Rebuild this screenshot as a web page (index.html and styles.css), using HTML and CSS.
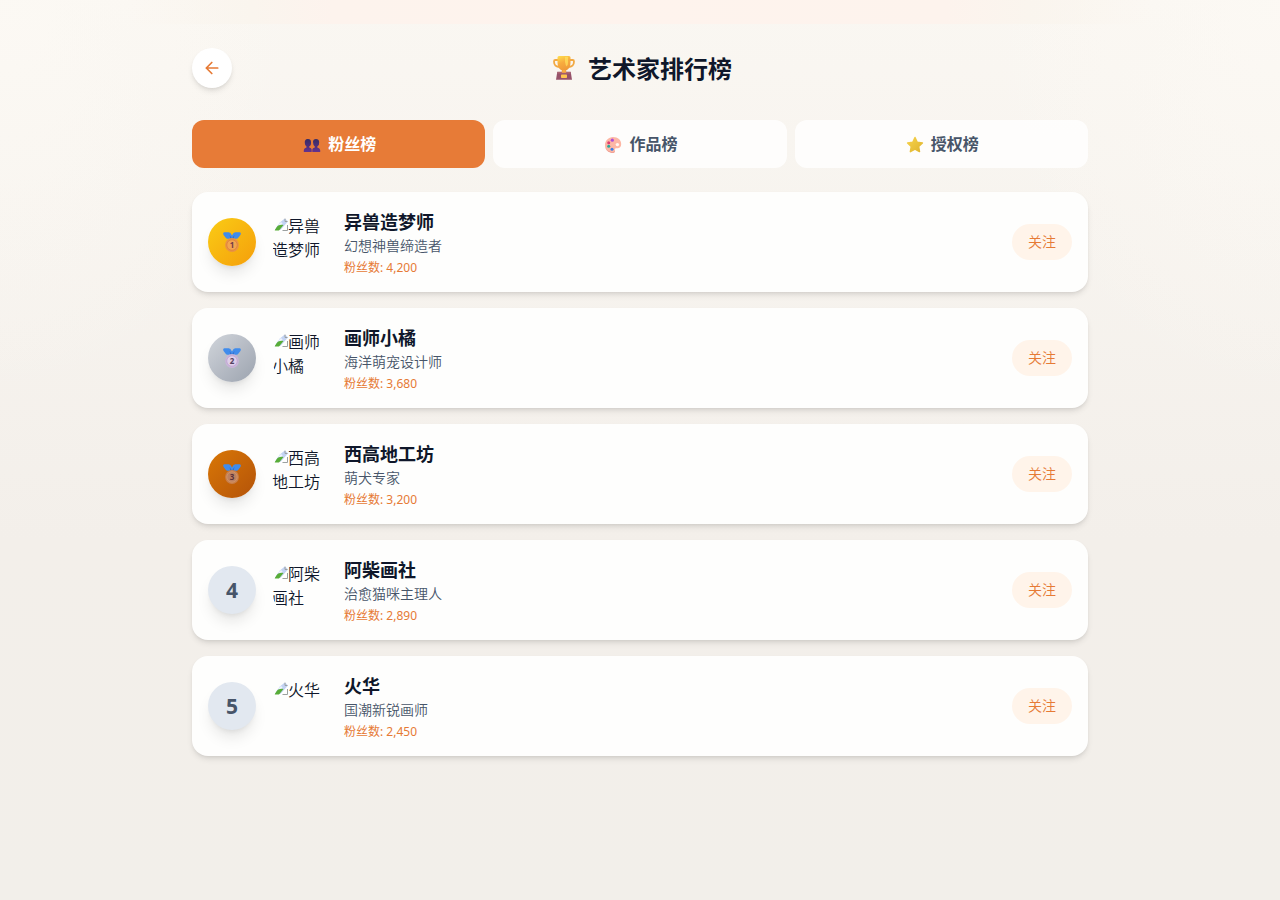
FILE: index.html
```html
<!DOCTYPE html>
<html lang="zh-CN">
<head>
<meta charset="UTF-8">
<title>艺术家排行榜</title>
<link rel="stylesheet" href="styles.css">
</head>
<body>
<svg width="0" height="0" class="defs" aria-hidden="true">
  <defs>
    <linearGradient id="cup" x1="0" y1="0" x2="0.3" y2="1"><stop offset="0" stop-color="#ffe04d"/><stop offset="0.45" stop-color="#f8ac3f"/><stop offset="1" stop-color="#ed9639"/></linearGradient>
    <linearGradient id="people" x1="0" y1="0" x2="0" y2="1"><stop offset="0" stop-color="#382c64"/><stop offset="1" stop-color="#64328e"/></linearGradient>
    <linearGradient id="star" x1="0" y1="0" x2="1" y2="1"><stop offset="0" stop-color="#f7d34c"/><stop offset="1" stop-color="#dfb42e"/></linearGradient>
    <symbol id="broken" viewBox="0 0 16 16">
      <path d="M3 9.500Q5 4 10 1.500h3L15.500 4v2L9 13H3z" fill="#c3d3f3"/>
      <path d="M5 8q1-2 2.500-1.500Q9 4 10.500 6.500L9 9z" fill="#eef3fc"/>
      <path d="M2.500 13.500Q4.500 8.500 8 8q2-.5 3.500 0L7 13.500z" fill="#58ad38"/>
      <path d="M7.500 14L15.800 4.800v2.400L10 14z" fill="#fff"/>
      <path d="M6 3.500Q8.500 1.500 10.500 1.500h2.300M13 1.500v3h2.500M10.500 13.500h5V8" fill="none" stroke="#9ca1a0"/>
    </symbol>
    <symbol id="ribbon" viewBox="0 0 20 20">
      <path d="M1.200 1.200Q1.500.3 2.500.3h4.200Q8.500.4 10 3.500 11.500.4 13.300.3h4.200q1 0 1.300.9.200.8-.4 1.700l-2.300 3.200q-.5.700-1.500.7H5.400q-1 0-1.500-.7L1.600 2.900Q1 2 1.200 1.200z" fill="#408cec"/>
      <path d="M7.500 3L10 6.500 12.500 3l-1 3.800h-3z" fill="#316cc8"/>
    </symbol>
  </defs>
</svg>
<div class="page">
  <div class="glow"></div>
  <main class="container">
    <header class="header">
      <button class="back" aria-label="返回">
        <svg width="16" height="16" viewBox="0 0 16 16" fill="none" stroke="#e67a35" stroke-width="1.700" stroke-linecap="round" stroke-linejoin="round"><path d="M7.800 2.500L2.300 8l5.500 5.500M2.300 8h11.400"/></svg>
      </button>
      <h1 class="title">
        <svg class="trophy" viewBox="0 0 24 26">
          <path d="M6 5H3.300Q2 5 2 6.500c0 3.500 2.500 5.500 6 5.500M18 5h2.700Q22 5 22 6.500c0 3.500-2.500 5.500-6 5.500" fill="none" stroke="#f2a943" stroke-width="1.800"/>
          <path d="M5.500 2.500Q5.500 1 7 1h10q1.500 0 1.500 1.500V8c0 4-2.200 6.500-4.500 7.500l.5 2.500h-5l.5-2.500C7.700 14.500 5.500 12 5.500 8z" fill="url(#cup)"/>
          <path d="M13 2q2-.6 3 0v6q0 2-1.500 3.600Q13.500 10 13 7z" fill="#ffe25e" opacity=".7"/>
          <path d="M5.300 16.700h13.400l1.300 8H4z" fill="#965269"/>
          <path d="M5.500 17h13v1.500H5.300z" fill="#ad6673"/>
          <path d="M10.700 15h2.600l1 2.800H9.700z" fill="#f9ad42"/>
          <rect x="9" y="19.500" width="6" height="3.400" rx=".7" fill="#ffc54f"/>
        </svg>
        <span class="title-text">艺术家排行榜</span>
      </h1>
      <div class="spacer"></div>
    </header>
    <nav class="tabs">
      <button class="tab tab-active">
        <svg class="tab-icon people" viewBox="0 0 18 18"><g fill="url(#people)"><path d="M1.800 6q-.4-3 2.200-3.900Q8 1.400 8 5q.4 3.500-1.800 4.500v1Q8.500 11 8.700 12.500V15H.8v-2Q1 11 3.500 10.500v-1Q1.800 8.500 1.800 6z"/><path d="M10 5q0-3 3-3t3.200 3q.3 3-1.900 4.500v1Q17 11 17.200 13v2H9.300v-2.500Q9.500 11 11.800 10.500v-1Q10 8 10 5z"/></g></svg>
        <span>粉丝榜</span>
      </button>
      <button class="tab">
        <svg class="tab-icon" viewBox="0 0 18 18"><path d="M9 1c5 0 8.200 3 8.200 7 0 3.500-2.200 4.700-4.500 4.300-1.800-.3-2.300.8-1.800 2 .5 1.500-.3 2.500-1.900 2.500C4.300 16.800 1 13.300 1 9s3.500-8 8-8z" fill="#fdb7a5"/><path d="M1.200 10c.6 3.700 3.300 6 7.300 6 1.200 0 2-.3 2.400-1 .2 1-.6 1.800-1.900 1.800C4.500 16.800 1.300 14 1.200 10z" fill="#e9958b"/><circle cx="13.400" cy="8.600" r="1.700" fill="#fff7f3"/><circle cx="8.300" cy="4.200" r="1.600" fill="#b04dd8"/><circle cx="4.700" cy="6.700" r="1.500" fill="#df3d70"/><circle cx="4.700" cy="10.300" r="1.500" fill="#28a899"/><circle cx="8" cy="13.200" r="1.500" fill="#3c7ee5"/></svg>
        <span>作品榜</span>
      </button>
      <button class="tab">
        <svg class="tab-icon" viewBox="0 0 18 18"><path d="M9 1.500l2.200 4.700 5.200.7-3.800 3.600.9 5.100L9 13.200l-4.600 2.400.9-5.100-3.700-3.600 5.200-.7z" fill="url(#star)" stroke="url(#star)" stroke-width="1.500" stroke-linejoin="round"/></svg>
        <span>授权榜</span>
      </button>
    </nav>
    <section class="list">
      <article class="card">
        <div class="rank gold"><svg class="medal" viewBox="0 0 20 20"><use href="#ribbon"/><circle cx="10" cy="13" r="6.900" fill="#e99245"/><circle cx="10" cy="13" r="5.200" fill="#f3a450" stroke="#d97b36" stroke-width=".6"/><text x="10" y="16" fill="#713b48">1</text></svg></div>
        <div class="avatar"><svg class="broken"><use href="#broken"/></svg>异兽造梦师</div>
        <div class="info"><h3 class="name">异兽造梦师</h3><p class="role">幻想神兽缔造者</p><p class="fans">粉丝数: 4,200</p></div>
        <button class="follow">关注</button>
      </article>
      <article class="card">
        <div class="rank silver"><svg class="medal" viewBox="0 0 20 20"><use href="#ribbon"/><circle cx="10" cy="13" r="6.900" fill="#c9b4d9"/><circle cx="10" cy="13" r="5.200" fill="#dfcfea" stroke="#b99ecb" stroke-width=".6"/><text x="10" y="16" fill="#54405f">2</text></svg></div>
        <div class="avatar"><svg class="broken"><use href="#broken"/></svg>画师小橘</div>
        <div class="info"><h3 class="name">画师小橘</h3><p class="role">海洋萌宠设计师</p><p class="fans">粉丝数: 3,680</p></div>
        <button class="follow">关注</button>
      </article>
      <article class="card">
        <div class="rank bronze"><svg class="medal" viewBox="0 0 20 20"><use href="#ribbon"/><circle cx="10" cy="13" r="6.900" fill="#c77e4d"/><circle cx="10" cy="13" r="5.200" fill="#bd8060" stroke="#dda06b" stroke-width=".6"/><text x="10" y="16" fill="#59333b">3</text></svg></div>
        <div class="avatar"><svg class="broken"><use href="#broken"/></svg>西高地工坊</div>
        <div class="info"><h3 class="name">西高地工坊</h3><p class="role">萌犬专家</p><p class="fans">粉丝数: 3,200</p></div>
        <button class="follow">关注</button>
      </article>
      <article class="card">
        <div class="rank plain">4</div>
        <div class="avatar"><svg class="broken"><use href="#broken"/></svg>阿柴画社</div>
        <div class="info"><h3 class="name">阿柴画社</h3><p class="role">治愈猫咪主理人</p><p class="fans">粉丝数: 2,890</p></div>
        <button class="follow">关注</button>
      </article>
      <article class="card">
        <div class="rank plain">5</div>
        <div class="avatar"><svg class="broken"><use href="#broken"/></svg>火华</div>
        <div class="info"><h3 class="name">火华</h3><p class="role">国潮新锐画师</p><p class="fans">粉丝数: 2,450</p></div>
        <button class="follow">关注</button>
      </article>
    </section>
  </main>
</div>
</body>
</html>
```
FILE: styles.css
```css
* { box-sizing: border-box; margin: 0; padding: 0; }
body {
  font-family: "Noto Sans", "Noto Sans CJK SC", sans-serif;
  font-size: 16px;
  line-height: 24px;
  color: #0f172a;
}
button { border: 0; font: inherit; }
.defs { position: absolute; }
.page {
  position: relative;
  min-height: 900px;
  background:
    radial-gradient(ellipse 300px 400px at 0 0, rgba(253, 250, 245, .6), transparent),
    radial-gradient(ellipse 300px 400px at 100% 0, rgba(253, 250, 245, .6), transparent),
    linear-gradient(#faf7f2, #f3efea 60%, #f2efea);
}
.glow {
  position: absolute;
  top: 0;
  left: 128px;
  right: 128px;
  height: 24px;
  background: linear-gradient(90deg, rgba(250, 245, 238, 0), #faf5ee 12%, #fdf3ed 20%, #fef3ed 50%, #fdf3ed 80%, #faf5ee 88%, rgba(250, 245, 238, 0));
}
.container { position: relative; width: 896px; margin: 0 auto; padding-top: 48px; }
.header { display: flex; align-items: center; justify-content: space-between; margin-bottom: 32px; }
.back {
  display: flex; align-items: center; justify-content: center;
  width: 40px; height: 40px; border-radius: 50%; background: #fff;
  box-shadow: 0 4px 6px -1px rgba(0, 0, 0, .1), 0 2px 4px -2px rgba(0, 0, 0, .1);
}
.title { display: flex; align-items: center; gap: 12px; font-size: 24px; line-height: 32px; font-weight: 700; margin-left: 4px; }
.title-text { padding-top: 1px; }
.trophy { width: 24px; height: 26px; }
.spacer { width: 40px; }
.tabs { display: grid; grid-template-columns: repeat(3, 1fr); gap: 8px; margin-bottom: 24px; }
.tab {
  display: flex; align-items: center; justify-content: center; gap: 7px;
  height: 48px; padding-left: 2px; border-radius: 12px; font-weight: 600; color: #475569;
  background: rgba(255, 255, 255, .8);
}
.tab-active { background: #e77b37; color: #fff; }
.tab-icon { width: 18px; height: 18px; margin-top: 1px; }
.people { margin-top: 4px; }
.list { display: grid; gap: 16px; }
.card {
  display: flex; align-items: center; gap: 16px; height: 100px; padding: 16px;
  border-radius: 16px; background: #fefefd;
  box-shadow: 0 4px 6px -1px rgba(0, 0, 0, .1), 0 2px 4px -2px rgba(0, 0, 0, .1);
}
.rank {
  display: flex; align-items: center; justify-content: center;
  width: 48px; height: 48px; border-radius: 50%;
  font-size: 21px; font-weight: 700;
  box-shadow: 0 10px 15px -3px rgba(0, 0, 0, .1), 0 4px 6px -4px rgba(0, 0, 0, .1);
}
.gold { background: linear-gradient(135deg, #facc15, #f59e0b); }
.silver { background: linear-gradient(135deg, #d1d5db, #9ca3af); }
.bronze { background: linear-gradient(135deg, #d97706, #b45309); }
.plain { background: #e2e8f0; color: #475569; }
.medal { width: 20px; height: 20px; }
.medal text { font-size: 8px; font-weight: 700; text-anchor: middle; }
.avatar { width: 56px; height: 56px; border-radius: 50%; overflow: hidden; word-break: break-all; font-weight: 350; }
.broken { width: 16px; height: 16px; vertical-align: -1px; }
.info { flex: 1; }
.name { font-size: 18px; line-height: 28px; font-weight: 700; }
.role { font-size: 14px; line-height: 20px; color: #475569; font-weight: 350; }
.fans { margin-top: 4px; font-size: 12px; line-height: 16px; color: #e67a35; }
.follow {
  width: 60px; height: 36px; border-radius: 18px;
  background: #fff4ea; color: #e67a35; font-size: 14px; line-height: 20px; font-weight: 350;
}
```
